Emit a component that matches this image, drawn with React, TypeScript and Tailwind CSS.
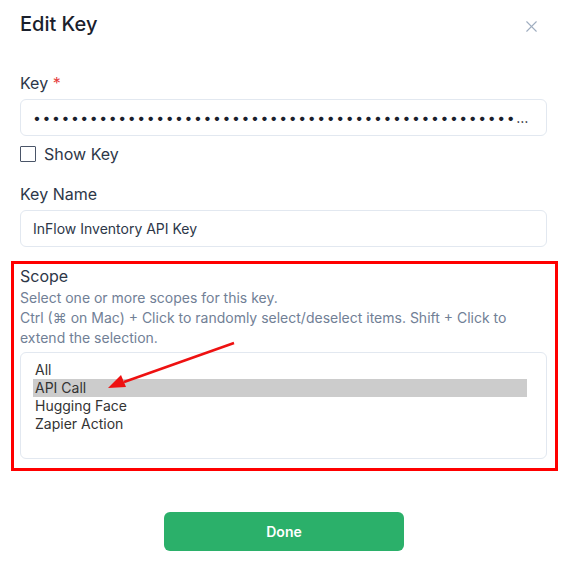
import { X } from "lucide-react";

const scopes = ["All", "API Call", "Hugging Face", "Zapier Action"];

const App = () => {
  return (
    <div
      className="relative h-[569px] w-[568px] bg-white pl-5 pr-[21px] text-[#2d3748]"
      style={{ fontFamily: "Inter, 'Noto Sans', sans-serif" }}
    >
      <div className="flex items-center justify-between pt-[10px]">
        <h2 className="text-[20px] font-medium leading-7 text-[#1a202c]">Edit Key</h2>
        <X className="mr-[6px] mt-[4px] h-[19px] w-[19px] text-[#a0aec0]" strokeWidth={1.4} />
      </div>

      <div className="mt-[33px]">
        <label className="block text-[16px] leading-6">
          Key <span className="text-[#e53e3e]">*</span>
        </label>
        <div className="mt-[4px] flex h-[37px] items-center rounded-md border border-[#e2e8f0] px-3">
          <div className="truncate text-[14px] tracking-[1.6px] text-[#1a202c]">
            {"•".repeat(90)}
          </div>
        </div>
        <div className="mt-[6px] flex items-center gap-2">
          <span className="h-4 w-4 rounded-[1px] border border-[#4a5568]" />
          <span className="text-[16px] leading-6">Show Key</span>
        </div>
      </div>

      <div className="mt-[16px]">
        <label className="block text-[16px] leading-6">Key Name</label>
        <div className="mt-[4px] flex h-[37px] items-center rounded-md border border-[#e2e8f0] px-3 text-[14px]">
          InFlow Inventory API Key
        </div>
      </div>

      <div className="ml-[-9px] mr-[-11px] mt-[14px] border-[3px] border-[#ff0000] pb-[9px] pl-[6px] pr-[8px]">
        <label className="block text-[16px] leading-6">Scope</label>
        <p className="text-[14px] leading-5 text-[#718096]">
          Select one or more scopes for this key.
          <br />
          Ctrl (⌘ on Mac) + Click to randomly select/deselect items. Shift + Click to extend the selection.
        </p>
        <div className="mt-[4px] h-[107px] rounded-md border border-[#e2e8f0] pl-3 pr-[19px] pt-[8px]">
          {scopes.map((s) => (
            <div
              key={s}
              className={`px-[2px] text-[14px] leading-[18px] text-[#333] ${s === "API Call" ? "bg-[#cccccc]" : ""}`}
            >
              {s}
            </div>
          ))}
        </div>
      </div>

      <div className="mt-[41px] flex justify-center">
        <button className="ml-[1px] h-[39px] w-[240px] rounded-md bg-[#2bb06a] text-[14px] font-semibold text-white">
          Done
        </button>
      </div>

      <svg className="pointer-events-none absolute left-0 top-0" width="568" height="569">
        <line x1="234" y1="343" x2="124" y2="382" stroke="#ee1111" strokeWidth="2.5" />
        <polygon points="108,388 121,375 126,387" fill="#ee1111" />
      </svg>
    </div>
  );
};

export default App;
